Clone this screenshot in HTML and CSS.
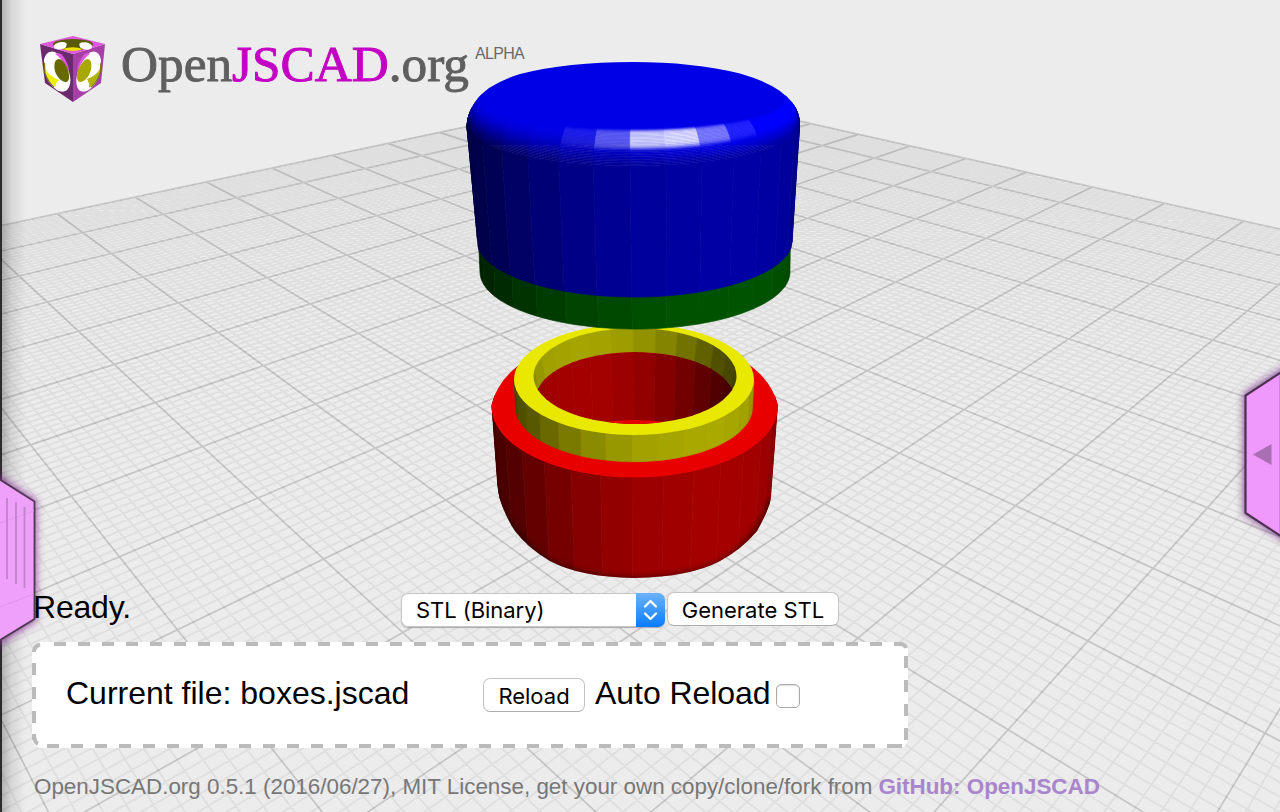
FILE: index.html
```html
<!DOCTYPE html>
<html lang="en">
<head>
<meta charset="utf-8">
<title>OpenJSCAD.org</title>
<link rel="stylesheet" href="styles.css">
</head>
<body>
<div class="app">
  <svg class="viewer" viewBox="0 0 1280 812" width="1280" height="812" aria-hidden="true">
    <defs>
      <linearGradient id="fade" x1="0" y1="0" x2="1" y2="0">
        <stop offset="0" stop-color="#000" stop-opacity=".24"/>
        <stop offset=".4" stop-color="#000" stop-opacity=".09"/>
        <stop offset="1" stop-color="#000" stop-opacity="0"/>
      </linearGradient>
      <filter id="glow" x="-60%" y="-20%" width="220%" height="140%"><feGaussianBlur stdDeviation="4"/></filter>
      <filter id="soft"><feGaussianBlur stdDeviation="3"/></filter>
      <clipPath id="capClip"><path d="M466.500 127 Q467 117 471 109 Q477 97 489 88 Q502 79.500 520 74 Q567 62 633 62 Q693 62 740 73.500 Q766 81 780 91 Q795 103 798 113 Q800 118 800 127 L792 250 V300 H478 V250 Z"/></clipPath>
      <clipPath id="cupClip"><path d="M491.500 405 L497 485 Q500 508 515 531 Q528 548 550 561 Q580 577 634 578 Q690 577 720 561 Q742 549 757 531 Q770 508 772 493 L778 405 Q760 340 634 336 Q508 340 491.500 405 Z"/></clipPath>
      <clipPath id="boreClip"><ellipse cx="635" cy="376" rx="101.500" ry="48"/></clipPath>
      <clipPath id="redBoreClip"><ellipse cx="635" cy="398" rx="99" ry="46"/></clipPath>
    </defs>
    <g id="floor"></g>
    <g id="cup" clip-path="url(#cupClip)"></g>
    <g id="ring"></g>
    <g id="band"></g>
    <g id="cap" clip-path="url(#capClip)"></g>
    <rect x="2" y="0" width="24" height="812" fill="url(#fade)"/>
    <rect x="0" y="0" width="2" height="812" fill="#2b2b2b"/>
    <g>
      <path d="M-8 474 L34.500 501 L34.500 620 L-8 646 Z" fill="#8a2a9a" stroke="#8a2a9a" stroke-width="3" opacity=".85" filter="url(#glow)"/>
      <path d="M-8 474.500 L34.500 501.500 L34.500 619 L-8 645 Z" fill="#efa0fa" stroke="#4d3a52" stroke-width="1.800"/>
      <path d="M0 523 L34 511 M0 607 L34 594" stroke="#e394ef" stroke-width="1"/>
      <path d="M7 498 V579 M16 502 V584 M24.500 507 V588" stroke="#bd85c6" stroke-width="1.800"/>
    </g>
    <g>
      <path d="M1290 366 L1245.500 395 L1245.500 513 L1290 542 Z" fill="#6b1a80" stroke="#6b1a80" stroke-width="3" opacity=".85" filter="url(#glow)"/>
      <path d="M1290 366.500 L1245.500 395.500 L1245.500 513 L1290 542 Z" fill="#ee99fb" stroke="#4b3050" stroke-width="2.200"/>
      <path d="M1253 454.500 L1271.500 444 V465 Z" fill="#a870b2"/>
      <path d="M1279.500 375 V534" stroke="#d583e4"/>
    </g>
  </svg>

  <header class="brand">
    <svg class="cube" viewBox="0 0 66 66" width="66" height="66" aria-hidden="true">
      <path d="M0 8 L33 18 V66 L5 47 Z" fill="#6b2a6c"/>
      <path d="M65 8 L33 18 V66 L61 47 Z" fill="#a63fa6"/>
      <path d="M0 8 L33 0 L65 8 L33 18 Z" fill="#de57de"/>
      <ellipse cx="33" cy="8.500" rx="20" ry="5.500" fill="#5a5a00"/>
      <ellipse cx="20.500" cy="9.800" rx="6.800" ry="3.600" fill="#fff" transform="rotate(-10 20 10)"/>
      <ellipse cx="45.500" cy="9.800" rx="6.800" ry="3.600" fill="#fff" transform="rotate(10 45 10)"/>
      <path d="M27 7 Q33 5.500 39 7 L40 12 H26 Z" fill="#5a5a00"/>
      <path d="M22 13 Q33 9.500 43 13 Q33 17 22 13 Z" fill="#f0e000"/>
      <path d="M4 24 C6 13 16 13 22 22 C31 35 33 48 27 54 C20 60 8 49 5 37 Z" fill="#fff"/>
      <path d="M61 24 C59 13 50 13 44 22 C36 35 34 48 39 54 C46 60 57 49 60 37 Z" fill="#fff"/>
      <path d="M15 18 Q21 14 26 25 Q29 31 29 35 Q20 20 15 18 Z" fill="#de57de"/>
      <path d="M50 18 Q45 14 40 25 Q37 31 37 35 Q44 21 50 18 Z" fill="#de57de"/>
      <path d="M15 26 C18 19 25 25 28 34 C30 41 29 46 26 46 C20 46 12 36 15 26 Z" fill="#686800"/>
      <path d="M51 26 C48 19 42 25 38 34 C36 41 37 46 40 46 C46 46 53 36 51 26 Z" fill="#a8a800"/>
      <path d="M5 33 Q9 40 19 44 Q15 47 16 51 Q6 44 5 33 Z" fill="#eeee00"/>
      <path d="M60 33 Q56 40 47 43 Q50 48 49 52 Q59 44 60 33 Z" fill="#b4b400"/>
      <path d="M4.500 27 L5 37 Q8 46 14 51" fill="none" stroke="#77770a" stroke-width="1.200"/>
      <path d="M61 27 L60 37 Q57 46 51 51" fill="none" stroke="#77770a" stroke-width="1.200"/>
    </svg>
    <svg class="wordmark" width="352" height="66" viewBox="0 0 352 66">
      <text x="0" y="45" textLength="348" lengthAdjust="spacingAndGlyphs"><tspan class="grey">Open</tspan><tspan class="pink">JSCAD</tspan><tspan class="grey">.org</tspan></text>
    </svg>
    <span class="alpha">ALPHA</span>
  </header>

  <main class="tail">
    <div class="status">
      <span class="state">Ready.</span>
      <div class="format">STL (Binary)
        <span class="stepper"><svg viewBox="0 0 29 34" width="29" height="34"><path d="M9 13.500 L14.500 8 L20 13.500 M9 20.500 L14.500 26 L20 20.500" fill="none" stroke="#fff" stroke-width="2.200" stroke-linecap="round" stroke-linejoin="round"/></svg></span>
      </div>
      <button class="btn generate">Generate STL</button>
    </div>
    <section class="filebox">
      <svg class="dashes" width="876" height="106" viewBox="0 0 876 106"><path d="M22 2 H868 M15 104 H868 M2 21 V98 M874 14 V98" fill="none" stroke="#bbb" stroke-width="4" stroke-dasharray="12 12"/><path d="M2 10 Q2 4 8 2.500 M868 2 Q873 2 874 6 M2 92 Q2 100 6 102 M866 104 H870" fill="none" stroke="#bbb" stroke-width="4"/></svg>
      <span class="current">Current file: boxes.jscad</span>
      <button class="btn reload">Reload</button>
      <span class="auto">Auto Reload</span>
      <span class="check" role="checkbox" aria-checked="false"></span>
    </section>
    <footer class="about"><span class="version">OpenJSCAD.org 0.5.1 (2016/06/27), MIT License, get your own copy/clone/fork from</span> <a class="link">GitHub: OpenJSCAD</a></footer>
  </main>
</div>
<script src="scene.js"></script>
</body>
</html>
```
FILE: styles.css
```css
* { box-sizing: border-box; }
body { margin: 0; background: #ececec; font-family: "Liberation Sans", Arial, sans-serif; color: #000; }
.app { position: relative; width: 1280px; height: 812px; overflow: hidden; display: flex; flex-direction: column; justify-content: space-between; }
.viewer { position: absolute; inset: 0; display: block; }
.brand { position: relative; display: flex; align-items: flex-start; padding: 36px 0 0 40px; }
.cube { display: block; }
.wordmark { display: block; margin-left: 15px; overflow: visible; font: 50px "Liberation Serif", serif; }
.grey { fill: #5f5f5f; stroke: #5f5f5f; stroke-width: .9px; }
.pink { fill: #c400c4; stroke: #c400c4; stroke-width: .9px; }
.alpha { font-size: 16px; line-height: 18px; margin: 9px 0 0 2px; color: #6a6a6a; letter-spacing: -.7px; }
.tail { position: relative; padding-left: 32px; height: 220px; }
.status { display: flex; align-items: flex-start; height: 50px; }
.state { width: 369px; padding-left: 1px; margin-top: -1px; font-size: 32px; line-height: 32px; letter-spacing: -.2px; }
.format { display: flex; justify-content: space-between; align-items: center; width: 264px; height: 34px; margin: 1px 2px 0 0; padding-left: 15px; background: #fff; border-radius: 7px; box-shadow: 0 0 0 1px #c6c6c6 inset, 0 1px 1px #aaa; font: 22px Inter, sans-serif; letter-spacing: -.05px; white-space: nowrap; }
.stepper { width: 29px; height: 34px; border-radius: 0 7px 7px 0; background: linear-gradient(#6cb3fa, #0a7cff); }
.stepper svg { display: block; }
.btn { padding: 1px 0 0; height: 34px; background: #fff; border: 1px solid #c4c4c4; border-bottom-color: #adadad; border-radius: 7px; font: 22px Inter, sans-serif; color: #000; white-space: nowrap; }
.generate { width: 172px; }
.filebox { position: relative; display: flex; align-items: flex-start; width: 876px; height: 106px; padding: 35px 0 0 34px; background: #fff; border-radius: 9px; }
.dashes { position: absolute; inset: 0; }
.filebox > span, .filebox > button { position: relative; }
.current { width: 417px; font-size: 32px; line-height: 32px; }
.reload { width: 102px; margin: 1px 10px 0 0; }
.auto { width: 181px; font-size: 32px; line-height: 32px; letter-spacing: -.05px; }
.check { width: 24px; height: 24px; margin-top: 7px; border: 1px solid #aaa; border-radius: 5px; background: #fff; box-shadow: inset 0 1px 2px #ddd; }
.about { display: flex; gap: 6px; padding: 25px 0 0 2px; font-size: 22.4px; line-height: 28px; color: #777; white-space: nowrap; }
.link { font-weight: bold; color: #a885cc; }
```
FILE: scene.js
```javascript
const NS = 'http://www.w3.org/2000/svg';
const $ = id => document.getElementById(id);
function add(parent, tag, attrs) {
  const el = document.createElementNS(NS, tag);
  for (const k in attrs) el.setAttribute(k, attrs[k]);
  parent.appendChild(el);
  return el;
}

/* Floor plane: [u, v, x, y] pairs of grid nodes and their projected positions. */
const nodes = [
  [0, 11, 1243.3, 221], [0, 5, 858.3, 134.3], [11, 0, 57.3, 213.8], [6, 0, 388, 143],
  [13, 9, 178.3, 630], [13, 7, 71, 495.7], [9, 14, 1266.7, 732], [10, 13, 1008, 729],
  [10, 12, 857, 638], [9, 12, 943.3, 566.7], [8, 12, 1015, 505.7], [7, 13, 1208, 507.3],
  [12, 9, 323.3, 558.3], [11, 9, 445, 500], [10, 8, 477, 406], [9, 7, 498, 335],
  [9, 13, 1087, 641], [5, 9, 896.7, 282.3], [8, 10, 801.7, 409]
];
function fitProjection(pts) {
  const M = Array.from({ length: 8 }, () => new Array(9).fill(0));
  for (const [u, v, x, y] of pts) {
    const rows = [
      [u, v, 1, 0, 0, 0, -u * x, -v * x, x],
      [0, 0, 0, u, v, 1, -u * y, -v * y, y]
    ];
    for (const r of rows)
      for (let i = 0; i < 8; i++) for (let j = 0; j < 9; j++) M[i][j] += r[i] * r[j];
  }
  for (let c = 0; c < 8; c++) {
    let p = c;
    for (let r = c + 1; r < 8; r++) if (Math.abs(M[r][c]) > Math.abs(M[p][c])) p = r;
    [M[c], M[p]] = [M[p], M[c]];
    for (let r = 0; r < 8; r++) if (r !== c) {
      const f = M[r][c] / M[c][c];
      for (let k = c; k < 9; k++) M[r][k] -= f * M[c][k];
    }
  }
  return M.map((r, i) => r[8] / r[i]);
}
const h = fitProjection(nodes);
const depth = (u, v) => h[6] * u + h[7] * v + 1;
function project(u, v) {
  const w = depth(u, v);
  return ((h[0] * u + h[1] * v + h[2]) / w).toFixed(2) + ' ' + ((h[3] * u + h[4] * v + h[5]) / w).toFixed(2);
}
function gridLine(k, alongV) {
  const at = t => alongV ? [k, t] : [t, k];
  let end = 0;
  while (end < 20 && depth(...at(end + 0.1)) > 0.12) end += 0.1;
  return end > 0 ? 'M' + project(...at(0)) + 'L' + project(...at(end)) : '';
}
let minor = '', major = '';
for (let n = 0; n <= 200; n++) {
  const d = gridLine(n / 10, true) + gridLine(n / 10, false);
  if (n % 10) minor += d; else major += d;
}
add($('floor'), 'path', { d: minor, fill: 'none', stroke: '#000', 'stroke-opacity': .055, 'stroke-width': 1.9 });
add($('floor'), 'path', { d: major, fill: 'none', stroke: '#000', 'stroke-opacity': .165, 'stroke-width': 1.7 });

/* Solids are built from facets spanning two ellipses [cx, cy, rx, ry]. */
const rad = a => a * Math.PI / 180;
const pt = (e, a) => [e[0] + e[2] * Math.sin(rad(a)), e[1] + e[3] * Math.cos(rad(a))];
/* Facet edges follow the arc so that neighbouring solids meet without gaps. */
function quad(p, q, a, b) {
  const out = [];
  for (let i = 0; i <= 4; i++) out.push(pt(p, a + (b - a) * i / 4));
  for (let i = 4; i >= 0; i--) out.push(pt(q, a + (b - a) * i / 4));
  return out.map(c => c.map(n => n.toFixed(1)).join()).join(' ');
}
const ramp = (stops, a) => {
  for (let i = 1; i < stops.length; i++) if (a <= stops[i][0]) {
    const [a0, v0] = stops[i - 1], [a1, v1] = stops[i];
    return v0 + (v1 - v0) * Math.max(0, (a - a0) / (a1 - a0));
  }
  return stops[stops.length - 1][1];
};
const STEP = 12.7;
function facets(g, top, bottom, from, to, stops, rgb) {
  for (let k = from; k < to; k++) {
    const a = k * STEP - 1, b = a + STEP, v = ramp(stops, a + STEP / 2);
    const c = `rgb(${rgb.map(m => Math.round(m * v)).join()})`;
    add(g, 'polygon', { points: quad(top, bottom, a, b), fill: c, stroke: c, 'stroke-width': .7 });
  }
}
const ellipse = (g, e, fill) => add(g, 'ellipse', { cx: e[0], cy: e[1], rx: e[2], ry: e[3], fill });

/* Red cup */
const wall = [[-90, 62], [-60, 82], [-45, 102], [-30, 122], [-18, 138], [-6, 148], [6, 157], [20, 162], [40, 166], [65, 160], [90, 140]];
const cup = $('cup');
facets(cup, [634.5, 406, 143, 71], [634.5, 520, 134, 75], -8, 8, wall, [1, 0, 0]);
add(cup, 'path', { d: 'M494 490 Q500 525 545 561 Q580 580 634 581 Q690 580 722 564 Q760 540 773 500', fill: 'none', stroke: '#200000', 'stroke-width': 6, opacity: .8, filter: 'url(#soft)' });
ellipse(cup, [634.7, 406.5, 143.3, 71], '#e80000');

/* Yellow ring and the bore inside it */
const ring = $('ring');
facets(ring, [634, 379, 120, 55.5], [634, 407, 118.5, 54.7], -7, 7, wall.map(([a, v]) => [a, v + 4]), [1, 1, 0]);
ellipse(ring, [634, 379.5, 120, 55.5], '#e8e800');
const bore = add(ring, 'g', { 'clip-path': 'url(#boreClip)' });
const inner = [[-90, 62], [-60, 75], [-45, 95], [-30, 115], [-15, 136], [0, 152], [15, 162], [30, 166], [60, 160], [90, 135]];
const mirrored = inner.map(([a, v]) => [-a, v]).reverse();
facets(bore, [635, 376, 103, -49], [635, 398, 99, -46], -8, 8, mirrored, [1, 1, 0]);
const redBore = add(bore, 'g', { 'clip-path': 'url(#redBoreClip)' });
facets(redBore, [635, 398, 100, -47], [635, 470, 94, -46], -8, 8, mirrored, [1, 0, 0]);
ellipse(redBore, [635, 465, 92, 45], '#e60000');

/* Green band */
facets($('band'), [634.5, 240, 156, 56], [635, 272, 155, 57], -7, 7, wall.map(([a, v]) => [a, v / 2]), [0, 1, 0]);

/* Blue cap with a rounded shoulder */
const cap = $('cap');
add(cap, 'rect', { x: 460, y: 55, width: 350, height: 90, fill: '#0000e6' });
facets(cap, [633, 124, 167, 43], [634.5, 240, 158, 57], -8, 8, wall, [0, 0, 1]);
const glint = { '-3': .01, '-2': .12, '-1': .36, 0: .8, 1: .86, 2: .48, 3: .14 };
const shoulder = f => [633, 100 + 26 * (1 - Math.cos(rad(f))), 149 + 18 * Math.sin(rad(f)), 28 + 16 * Math.sin(rad(f))];
for (let k = -8; k < 8; k++) {
  const a = k * STEP - 1, b = a + STEP, base = ramp(wall, a + STEP / 2);
  for (let f = 0; f < 90; f += 3) {
    const t = f / 90, s = (glint[k] || 0) * Math.exp(-Math.pow((f - 27) / 21, 6));
    const lift = ramp([[-90, 0], [-20, 8], [20, 35], [90, 60]], a) * Math.sin(Math.PI * Math.min(1, t * 1.2));
    const e = Math.pow(t, 1.25);
    const v = Math.min(255, 230 + (base - 230) * e * e * (3 - 2 * e) + lift);
    const w = Math.round(255 * s), c = `rgb(${w},${w},${Math.round(v + (255 - v) * s)})`;
    add(cap, 'polygon', { points: quad(shoulder(f), shoulder(f + 3), a, b), fill: c, stroke: c, 'stroke-width': .5 });
  }
}
```
